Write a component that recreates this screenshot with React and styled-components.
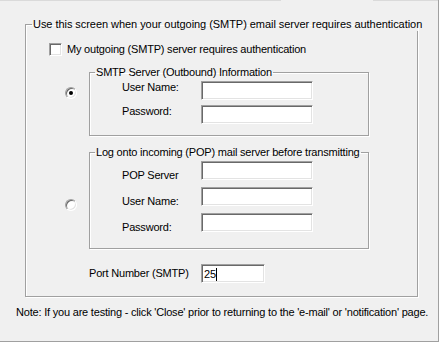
import React from 'react';
import styled, { createGlobalStyle } from 'styled-components';

const GlobalStyle = createGlobalStyle`
  html, body {
    margin: 0;
    padding: 0;
    background: #f0f0f0;
  }
  body {
    font-family: "Liberation Sans", Arial, sans-serif;
    font-size: 11px;
    letter-spacing: -0.2px;
    color: #000;
  }
`;

const Page = styled.div`
  position: relative;
  box-sizing: border-box;
  width: 439px;
  height: 342px;
  background: #f0f0f0;
  border-right: 1px solid #a0a0a0;
  border-bottom: 1px solid #a0a0a0;
  box-shadow: 1px 1px 0 #696969;
  display: flex;
  flex-direction: column;
`;

const TopEdge = styled.div`
  display: flex;
  height: 1px;
  margin-bottom: 17px;
`;

const EdgeLine = styled.div`
  height: 1px;
  width: ${(p) => p.$w}px;
  margin-left: ${(p) => p.$gap || 0}px;
  background: #dadada;
`;

const Group = styled.fieldset`
  box-sizing: border-box;
  margin: ${(p) => p.$margin || 0};
  padding: 0;
  min-inline-size: 0;
  width: ${(p) => p.$w}px;
  height: ${(p) => p.$h}px;
  border: 1px solid #a0a0a0;
  box-shadow: inset 1px 1px 0 #fff, 1px 1px 0 #fff;
  display: flex;
  flex-direction: column;
`;

const Caption = styled.legend`
  padding: 0 1px;
  margin-left: ${(p) => p.$x}px;
  letter-spacing: ${(p) => p.$spacing || '-0.2px'};
  line-height: 13px;
  white-space: nowrap;
`;

const CheckRow = styled.label`
  display: flex;
  align-items: center;
  gap: 5px;
  margin: 12px 0 0 23px;
  line-height: 13px;
`;

const CheckBox = styled.span`
  box-sizing: border-box;
  width: 13px;
  height: 13px;
  background: #fff;
  border: 1px solid;
  border-color: #a0a0a0 #fff #fff #a0a0a0;
  box-shadow: inset 1px 1px 0 #696969, inset -1px -1px 0 #e3e3e3;
`;

const OptionRow = styled.div`
  display: flex;
  align-items: flex-start;
  gap: 12px;
  margin: 10px 0 0 39px;
`;

const Radio = styled.span`
  box-sizing: border-box;
  flex: none;
  width: 12px;
  height: 12px;
  margin-top: ${(p) => p.$top}px;
  border-radius: 50%;
  background: #fff;
  border: 1px solid;
  border-color: #a0a0a0 #fff #fff #a0a0a0;
  box-shadow: inset 1px 1px 0 #696969, inset -1px -1px 0 #e3e3e3;
  display: flex;
  align-items: center;
  justify-content: center;

  &::after {
    content: '';
    width: 4px;
    height: 4px;
    border-radius: 50%;
    background: ${(p) => (p.$checked ? '#000' : 'transparent')};
  }
`;

const Fields = styled.div`
  display: flex;
  flex-direction: column;
  gap: 5px;
  padding: 2px 0 0 32px;
`;

const Field = styled.div`
  display: flex;
  align-items: flex-start;
`;

const Label = styled.span`
  width: ${(p) => p.$w || 79}px;
  padding-top: ${(p) => p.$shift || 0}px;
  line-height: 13px;
  white-space: nowrap;
`;

const TextBox = styled.div`
  box-sizing: border-box;
  width: ${(p) => p.$w || 112}px;
  height: 19px;
  padding: 2px 0 0 2px;
  background: #fff;
  border: 1px solid;
  border-color: #a0a0a0 #fff #fff #a0a0a0;
  box-shadow: inset 1px 1px 0 #696969, inset -1px -1px 0 #e3e3e3;
  line-height: 13px;
  display: flex;
  align-items: center;
`;

const Caret = styled.span`
  width: 1px;
  height: 13px;
  background: #000;
`;

const PortRow = styled.div`
  display: flex;
  align-items: center;
  margin: 15px 0 0 63px;
`;

const Note = styled.p`
  margin: 9px 0 0 16px;
  line-height: 13px;
  white-space: nowrap;
`;

const smtpFields = ['User Name:', 'Password:'];
const popFields = ['POP Server', 'User Name:', 'Password:'];

export default function App() {
  return (
    <>
      <GlobalStyle />
      <Page>
        <TopEdge>
          <EdgeLine $w={281} />
          <EdgeLine $w={65} $gap={92} />
        </TopEdge>
        <Group $margin="0 0 0 25px" $w={393} $h={279}>
          <Caption $x={6} $spacing="-0.05px">
            Use this screen when your outgoing (SMTP) email server requires authentication
          </Caption>
          <CheckRow>
            <CheckBox />
            My outgoing (SMTP) server requires authentication
          </CheckRow>
          <OptionRow>
            <Radio $top={21} $checked />
            <Group $w={280} $h={70}>
              <Caption $x={5}>SMTP Server (Outbound) Information</Caption>
              <Fields>
                {smtpFields.map((f) => (
                  <Field key={f}>
                    <Label>{f}</Label>
                    <TextBox />
                  </Field>
                ))}
              </Fields>
            </Group>
          </OptionRow>
          <OptionRow>
            <Radio $top={53} />
            <Group $w={280} $h={103}>
              <Caption $x={5}>Log onto incoming (POP) mail server before transmitting</Caption>
              <Fields>
                {popFields.map((f) => (
                  <Field key={f}>
                    <Label $shift={8}>{f}</Label>
                    <TextBox />
                  </Field>
                ))}
              </Fields>
            </Group>
          </OptionRow>
          <PortRow>
            <Label $w={112}>Port Number (SMTP)</Label>
            <TextBox $w={64}>
              25
              <Caret />
            </TextBox>
          </PortRow>
        </Group>
        <Note>
          Note: If you are testing - click 'Close' prior to returning to the 'e-mail' or 'notification' page.
        </Note>
      </Page>
    </>
  );
}
